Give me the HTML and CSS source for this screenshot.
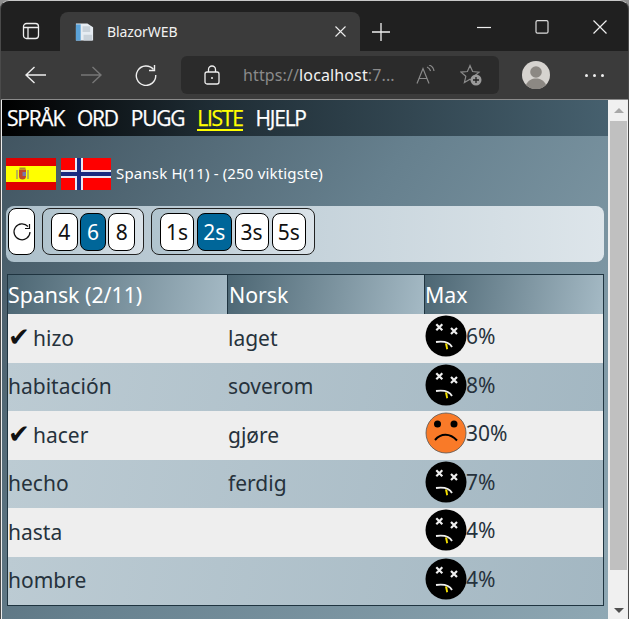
FILE: index.html
```html
<!DOCTYPE html>
<html lang="no">
<head>
<meta charset="utf-8">
<title>BlazorWEB</title>
<link rel="stylesheet" href="styles.css">
</head>
<body>
<svg class="defs" width="0" height="0" aria-hidden="true">
  <defs>
    <symbol id="dead" viewBox="0 0 42 42">
      <circle cx="21" cy="21" r="20.5" fill="#000"/>
      <path d="M11.300 9.300l6 6M17.300 9.300l-6 6M26 13l6 6M32 13l-6 6" stroke="#eee" stroke-width="2.200" fill="none"/>
      <path d="M11 27c7-1 13-.5 16 5" stroke="#eee" stroke-width="1.800" fill="none"/>
      <path d="M20 28.500l1.300 6 1.700-.5-.8-5.500z" fill="#f4e000"/>
    </symbol>
    <symbol id="sad" viewBox="0 0 42 42">
      <circle cx="21" cy="21" r="20" fill="#f97a28" stroke="#555" stroke-width="0.800"/>
      <circle cx="12.500" cy="12" r="3.500" fill="#000"/>
      <circle cx="29" cy="12" r="3.500" fill="#000"/>
      <path d="M10 28c6-7 15-7 22 .5" stroke="#000" stroke-width="2" fill="none"/>
    </symbol>
  </defs>
</svg>
<div class="window">
  <div class="tabstrip">
    <div class="tabs-btn">
      <svg width="18" height="18" viewBox="0 0 18 18" fill="none" stroke="#eee" stroke-width="1.300"><rect x="1.500" y="1.500" width="15" height="15" rx="3"/><path d="M1.500 5.500h15M6 5.500v11"/></svg>
    </div>
    <div class="tab">
      <svg class="favicon" width="21" height="22" viewBox="0 0 22 22"><path d="M2 2h12l6 4v14H2z" fill="#e6ecf2"/><path d="M2 3h5v17H2z" fill="#5aa2d8"/><path d="M9 5h8v6H9zM10 14h9v6h-9z" fill="#c9d2da"/></svg>
      <span class="tab-title">BlazorWEB</span>
      <svg class="tab-close" width="11" height="11" viewBox="0 0 11 11" stroke="#eee" stroke-width="1.100"><path d="M.5.500l10 10M10.500.500l-10 10"/></svg>
    </div>
    <svg class="new-tab" width="18" height="18" viewBox="0 0 18 18" stroke="#eee" stroke-width="1.300"><path d="M9 0v18M0 9h18"/></svg>
    <div class="win-controls">
      <svg width="14" height="14" viewBox="0 0 14 14" stroke="#eee" stroke-width="1.200"><path d="M0 7.500h14"/></svg>
      <svg width="14" height="14" viewBox="0 0 14 14" stroke="#ddd" stroke-width="1.200" fill="none"><rect x="1" y=".6" width="12" height="12.600" rx="1.500"/></svg>
      <svg width="14" height="14" viewBox="0 0 14 14" stroke="#eee" stroke-width="1.200"><path d="M.5.500l13 13M13.500.500l-13 13"/></svg>
    </div>
  </div>
  <div class="toolbar">
    <svg class="nav-icon" width="22" height="18" viewBox="0 0 22 18" fill="none" stroke="#eee" stroke-width="1.400"><path d="M21 9H1M9.500 1L1 9l8.500 8"/></svg>
    <svg class="nav-icon" width="22" height="18" viewBox="0 0 22 18" fill="none" stroke="#777" stroke-width="1.400"><path d="M1 9h20M12.500 1L21 9l-8.500 8"/></svg>
    <svg class="nav-icon" width="22" height="22" viewBox="0 0 22 22" fill="none" stroke="#eee" stroke-width="1.400"><path d="M18.500 5.500A9.700 9.700 0 1 0 20.700 11"/><path d="M19.500 1v5.500H14"/></svg>
    <div class="address">
      <svg class="lock" width="16" height="20" viewBox="0 0 16 20" fill="none" stroke="#eee" stroke-width="1.300"><rect x="1" y="7" width="14" height="12" rx="2"/><path d="M4.500 7V4.500a3.500 3.500 0 0 1 7 0V7"/><circle cx="8" cy="13" r="1" fill="#eee" stroke="none"/></svg>
      <span class="url"><span class="dim">https://</span><span class="bright">localhost</span><span class="dim">:7...</span></span>
      <svg class="read" width="20" height="20" viewBox="0 0 20 20" fill="none" stroke="#8a8a8a" stroke-width="1.200"><path d="M1 18.500L7 3.500l6 15M3 13.500h8"/><path d="M11 2c2 .8 3 2 3.600 4M13 0c2.500.8 4.500 3 5 6"/></svg>
      <svg class="fav" width="22" height="22" viewBox="0 0 22 22"><path d="M10 1.500l2.600 6 6.400.6-4.800 4.200 1.400 6.200-5.600-3.300-5.600 3.300 1.400-6.200L1 8.100l6.400-.6z" fill="none" stroke="#8a8a8a" stroke-width="1.200"/><circle cx="16" cy="16" r="5.500" fill="#9a9a9a"/><path d="M16 13v6M13 16h6" stroke="#222" stroke-width="1.300"/></svg>
    </div>
    <svg class="avatar" width="28" height="28" viewBox="0 0 28 28"><circle cx="14" cy="14" r="14" fill="#d6d3cf"/><circle cx="14" cy="11" r="5.800" fill="#8c8883"/><path d="M4 24c2-5 6-6.500 10-6.500s8 1.500 10 6.500a14 14 0 0 1-20 0z" fill="#8c8883"/></svg>
    <div class="more"><i></i><i></i><i></i></div>
  </div>
  <div class="viewport">
    <main class="page">
      <nav class="menu">
        <a>SPRÅK</a><a>ORD</a><a>PUGG</a><a class="current">LISTE</a><a>HJELP</a>
      </nav>
      <div class="content">
        <div class="heading">
          <svg class="flag" width="50" height="32" viewBox="0 0 50 32">
            <rect width="50" height="32" fill="#e00000"/><rect y="8" width="50" height="16" fill="#ffff00"/>
            <path d="M13 11.500h7v6.500a3.500 3.500 0 0 1-7 0z" fill="#c0452c"/>
            <rect x="16.500" y="14" width="3.500" height="4" fill="#7a78a8"/>
            <rect x="13.500" y="9.500" width="6" height="2" fill="#b08a30"/>
            <path d="M11 12v9M22 12v9" stroke="#9c9c70" stroke-width="1.400"/>
          </svg>
          <svg class="flag" width="50" height="32" viewBox="0 0 50 32"><rect width="50" height="32" fill="#ff0000"/><path d="M0 16h50M18 0v32" stroke="#e8e8f4" stroke-width="8"/><path d="M0 16h50M18 0v32" stroke="#1a2a80" stroke-width="4"/></svg>
          <span class="heading-text">Spansk H(11) - (250 viktigste)</span>
        </div>
        <div class="controls">
          <button class="btn refresh" type="button" aria-label="Oppdater">
            <svg width="20" height="20" viewBox="0 0 20 20" fill="none" stroke="#111" stroke-width="1.200"><path d="M16 4.500A8 8 0 1 0 18 10"/><path d="M17.500 2v4.500H13"/></svg>
          </button>
          <div class="group counts">
            <button class="btn" type="button">4</button><button class="btn on" type="button">6</button><button class="btn" type="button">8</button>
          </div>
          <div class="group times">
            <button class="btn" type="button">1s</button><button class="btn on" type="button">2s</button><button class="btn" type="button">3s</button><button class="btn" type="button">5s</button>
          </div>
        </div>
        <table class="words">
          <colgroup><col class="c1"><col class="c2"><col class="c3"></colgroup>
          <thead><tr><th>Spansk (2/11)</th><th>Norsk</th><th>Max</th></tr></thead>
          <tbody>
            <tr><td><span class="check">✔</span>hizo</td><td>laget</td><td class="max"><div class="score"><svg width="42" height="42"><use href="#dead"/></svg>6%</div></td></tr>
            <tr><td>habitación</td><td>soverom</td><td class="max"><div class="score"><svg width="42" height="42"><use href="#dead"/></svg>8%</div></td></tr>
            <tr><td><span class="check">✔</span>hacer</td><td>gjøre</td><td class="max"><div class="score"><svg width="42" height="42"><use href="#sad"/></svg>30%</div></td></tr>
            <tr><td>hecho</td><td>ferdig</td><td class="max"><div class="score"><svg width="42" height="42"><use href="#dead"/></svg>7%</div></td></tr>
            <tr><td>hasta</td><td></td><td class="max"><div class="score"><svg width="42" height="42"><use href="#dead"/></svg>4%</div></td></tr>
            <tr><td>hombre</td><td></td><td class="max"><div class="score"><svg width="42" height="42"><use href="#dead"/></svg>4%</div></td></tr>
          </tbody>
        </table>
      </div>
    </main>
    <div class="scrollbar">
      <span class="arrow up"></span>
      <span class="thumb"></span>
      <span class="arrow down"></span>
    </div>
  </div>
</div>
</body>
</html>
```
FILE: styles.css
```css
* { box-sizing: border-box; }
html, body { margin: 0; height: 100%; overflow: hidden; background: #8f8f8f; }
body { font-family: "Noto Sans", "Open Sans", sans-serif; }
.defs { position: absolute; }

.window {
  width: 629px; height: 619px; padding-top: 1px;
  display: flex; flex-direction: column;
  background: #202020;
  border-radius: 9px 9px 0 0;
  border: 1px solid #4a4a4a; border-bottom: 0; border-top-color: #c8c8c8;
}
.tabstrip { height: 49px; display: flex; align-items: flex-end; flex: none; }
.tabs-btn { width: 59px; height: 39px; display: flex; align-items: center; justify-content: center; align-self: flex-end; margin-bottom: 1px; }
.tab {
  width: 300px; height: 39px; background: #3b3b3b; border-radius: 8px 8px 0 0;
  display: flex; align-items: center; padding: 0 14px 0 14px; gap: 12px;
}
.tab-title { color: #f2f2f2; font: 14px "Noto Sans", sans-serif; letter-spacing: -0.100px; flex: 1; }
.new-tab { margin: 0 0 10px 12px; }
.win-controls { margin-left: auto; display: flex; gap: 44px; padding: 0 21px 0 0; align-self: flex-start; margin-top: 18px; }

.toolbar {
  height: 49px; background: #3b3b3b; flex: none;
  display: flex; align-items: center; padding: 0 0 0 24px;
  border-bottom: 1px solid #8a8a8a;
}
.nav-icon { margin-right: 33px; }
.nav-icon:nth-of-type(3) { margin-right: 24px; }
.address {
  width: 318px; height: 38px; background: #2b2b2b; border-radius: 6px;
  display: flex; align-items: center; padding: 0 0 0 23px;
}
.url { font: 16px "Noto Sans", sans-serif; letter-spacing: 0.120px; margin-left: 23px; width: 168px; white-space: nowrap; }
.dim { color: #8a8a8a; }
.bright { color: #f2f2f2; }
.read { margin-left: 5px; }
.fav { margin-left: 24px; }
.avatar { margin-left: 23px; }
.more { display: flex; gap: 5px; margin-left: 35px; }
.more i { width: 3px; height: 3px; border-radius: 50%; background: #eee; }

.viewport { flex: 1; display: flex; min-height: 0; background: #eee; padding-right: 1px; }
.page {
  flex: none; width: 606px; margin-left: 1px;
  background: linear-gradient(125deg, #3f525e 0%, #66808e 45%, #8fa8b4 100%);
}
.menu {
  height: 36px; display: flex; align-items: center; gap: 13px; padding: 0 0 0 5px;
  background: linear-gradient(90deg, #000 0%, #1f2d35 35%, #46606e 100%);
}
.menu a { color: #fff; font-size: 21px; font-weight: 400; -webkit-text-stroke: 0.250px; font-family: "Open Sans", sans-serif; letter-spacing: -1.250px; line-height: 24px; }
.menu .current { color: #ff0; border-bottom: 2px solid #ff0; line-height: 22px; margin-top: 2px; }

.content { padding: 22px 4px 0 4px; }
.heading { display: flex; align-items: center; gap: 5px; height: 32px; }
.heading-text { color: #fff; font-size: 15px; letter-spacing: 0.170px; padding-bottom: 2px; }
.flag { flex: none; }

.controls {
  margin-top: 16px; height: 56px; padding: 2px;
  display: flex; align-items: flex-start; gap: 7px;
  background: linear-gradient(90deg, #adc0cb 0%, #dde5ea 100%);
  border-radius: 8px;
}
.btn {
  width: 27px; height: 38px; padding: 0; margin: 0;
  background: #fff; border: 1px solid #000; border-radius: 8px;
  font: 21px "Noto Sans", sans-serif; color: #111;
  display: flex; align-items: center; justify-content: center;
}
.btn.on { background: #006699; color: #fff; }
.btn.refresh { height: 47px; }
.group {
  height: 47px; border: 1px solid #222; border-radius: 8px;
  display: flex; align-items: center;
  background: linear-gradient(90deg, #b0c3cd, #dbe3e9);
}
.counts { padding: 0 8px; gap: 2px; width: 102px; }
.times { padding: 0 8px; gap: 3px; width: 164px; }
.times .btn { width: 34.250px; }

.words {
  width: 597px; margin: 12px 0 0 1px; border-collapse: separate; border-spacing: 0; table-layout: fixed;
  border: 1px solid #1f3440;
}
.c1 { width: 219px; }
.c2 { width: 197px; }
.words th {
  height: 39px; padding: 0 0 1px 1px; text-align: left; color: #fff; font-weight: 400; font-size: 21.300px;
  background: linear-gradient(100deg, #4c6673, #a5bac5);
  border-left: 1px solid #1f3440;
}
.words th:first-child { border-left: 0; padding-left: 0; }
.words th:last-child { padding-left: 0; }
.words td { height: 48.500px; padding: 0 0 1px 1px; font-size: 21px; color: #26323c; }
.words td:first-child { padding-left: 0; }
.words td.max { padding-bottom: 0; }
.words tbody tr:nth-child(odd) { background: #eeeeee; }
.words tbody tr:nth-child(even) { background: linear-gradient(100deg, #bccbd3, #a3b7c2); }
.check { display: inline-block; width: 25px; color: #111; font-family: "DejaVu Sans", sans-serif; font-size: 26px; line-height: 20px; }
.score { display: flex; align-items: flex-start; height: 46px; line-height: 42px; }
.score svg { flex: none; margin-right: -1px; }

.scrollbar { flex: 1; background: #f0f0f0; display: flex; flex-direction: column; align-items: center; padding: 8px 0 6px 2px; }
.arrow { width: 0; height: 0; border-left: 5px solid transparent; border-right: 5px solid transparent; }
.arrow.up { border-bottom: 5px solid #a8a8a8; }
.arrow.down { border-top: 5px solid #505050; }
.thumb { width: 100%; height: 449px; background: #c0c0c0; margin: 8px 0 auto; }
```
